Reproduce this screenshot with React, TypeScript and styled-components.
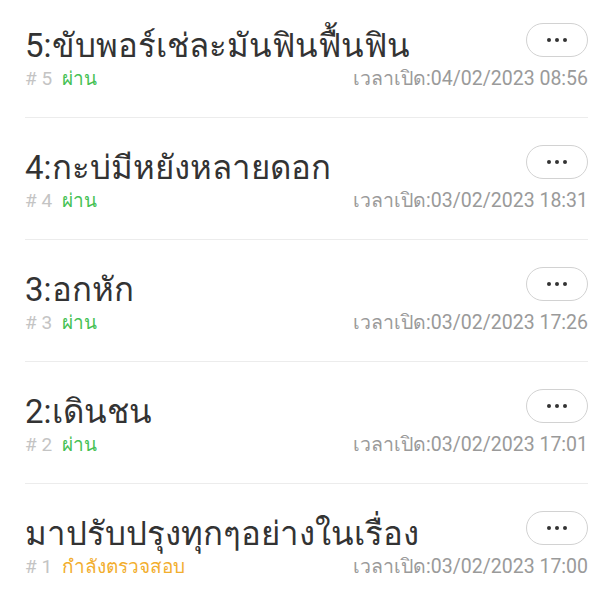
import React from 'react'
import styled, { createGlobalStyle } from 'styled-components'

type Status = 'pass' | 'review'

type Ticket = {
  id: number
  title: string
  status: Status
  openedAt: string
}

const tickets: Ticket[] = [
  { id: 5, title: '5:ขับพอร์เช่ละมันฟินฟื้นฟิน', status: 'pass', openedAt: '04/02/2023 08:56' },
  { id: 4, title: '4:กะบ่มีหยังหลายดอก', status: 'pass', openedAt: '03/02/2023 18:31' },
  { id: 3, title: '3:อกหัก', status: 'pass', openedAt: '03/02/2023 17:26' },
  { id: 2, title: '2:เดินชน', status: 'pass', openedAt: '03/02/2023 17:01' },
  { id: 1, title: 'มาปรับปรุงทุกๆอย่างในเรื่อง', status: 'review', openedAt: '03/02/2023 17:00' },
]

const statusLabel: Record<Status, string> = {
  pass: 'ผ่าน',
  review: 'กำลังตรวจสอบ',
}

const GlobalStyle = createGlobalStyle`
  body {
    margin: 0;
    background: #fff;
    font-family: Roboto, 'Noto Sans', 'DejaVu Sans', sans-serif;
  }
`

export default function App() {
  return (
    <>
      <GlobalStyle />
      <List>
        {tickets.map((t) => (
          <Row key={t.id}>
            <Top>
              <Title>{t.title}</Title>
              <MoreButton aria-label="more">
                <Dot />
                <Dot />
                <Dot />
              </MoreButton>
            </Top>
            <Meta>
              <Left>
                <Num># {t.id}</Num>
                <StatusText status={t.status}>{statusLabel[t.status]}</StatusText>
              </Left>
              <Time>เวลาเปิด:{t.openedAt}</Time>
            </Meta>
          </Row>
        ))}
      </List>
    </>
  )
}

const List = styled.div`
  padding: 0 26px 0 25px;
`

const Row = styled.div`
  padding: 27px 0 26px;
  border-bottom: 1px solid #ececec;

  &:first-child {
    padding-top: 23px;
  }
`

const Top = styled.div`
  display: flex;
  justify-content: space-between;
  align-items: flex-start;
`

const Title = styled.div`
  margin-top: 3px;
  font-size: 33px;
  line-height: 40px;
  color: #333;
`

const MoreButton = styled.button`
  display: flex;
  align-items: center;
  justify-content: center;
  gap: 4px;
  width: 62px;
  height: 34px;
  padding: 0;
  border: 1.5px solid #d2d2d2;
  border-radius: 17px;
  background: #fff;
`

const Dot = styled.span`
  width: 4px;
  height: 4px;
  border-radius: 50%;
  background: #333;
`

const Meta = styled.div`
  display: flex;
  justify-content: space-between;
  align-items: center;
  margin-top: 1px;
`

const Left = styled.div`
  display: flex;
  gap: 10px;
  font-size: 19px;
  line-height: 24px;
`

const Num = styled.span`
  color: #c4c4c4;
`

const StatusText = styled.span<{ status: Status }>`
  color: ${(p) => (p.status === 'pass' ? '#45c153' : '#f2ae2e')};
`

const Time = styled.span`
  font-size: 19.5px;
  line-height: 24px;
  color: #9a9a9a;
`
